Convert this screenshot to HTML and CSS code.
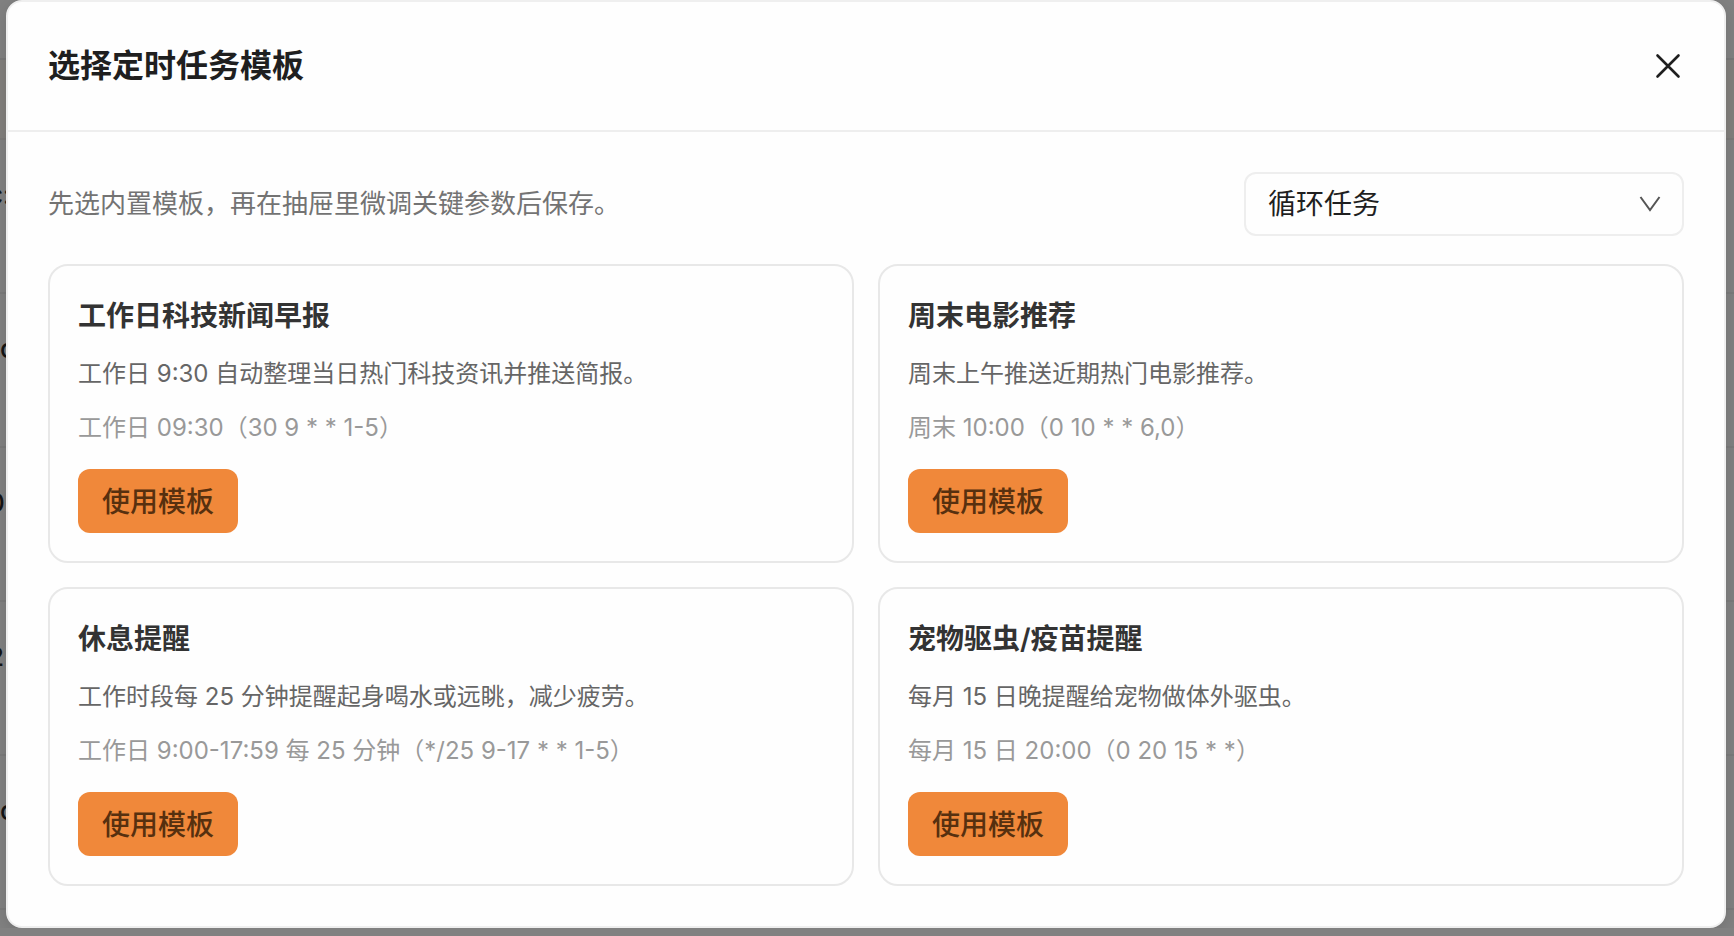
FILE: index.html
```html
<!DOCTYPE html>
<html lang="zh-CN">
<head>
  <meta charset="UTF-8">
  <meta name="viewport" content="width=device-width, initial-scale=1.0">
  <title>选择定时任务模板</title>
  <link rel="stylesheet" href="styles.css">
</head>
<body>
  <!-- Task list behind the modal -->
  <div class="page-behind" aria-hidden="true">
    <div class="row-head"></div>
    <div class="row"><span class="scrolled">c:</span></div>
    <div class="row"><span>c</span></div>
    <div class="row"><span class="scrolled">0</span></div>
    <div class="row"><span class="scrolled">2</span></div>
    <div class="row"><span>c</span></div>
  </div>

  <div class="modal" role="dialog" aria-labelledby="modalTitle">
    <header class="modal-header">
      <h1 id="modalTitle">选择定时任务模板</h1>
      <button class="close" type="button" aria-label="关闭">
        <svg viewBox="0 0 32 32" width="32" height="32" fill="none" stroke="currentColor" stroke-width="2.6" stroke-linecap="round">
          <path d="M5.5 5.5 26.5 26.5M26.5 5.5 5.5 26.5"/>
        </svg>
      </button>
    </header>

    <main class="modal-body">
      <div class="toolbar">
        <label for="taskType">先选内置模板，再在抽屉里微调关键参数后保存。</label>
        <div class="select-wrap">
          <select id="taskType">
            <option selected>循环任务</option>
          </select>
          <svg class="chevron" viewBox="0 0 24 24" width="24" height="24" fill="none" stroke="currentColor" stroke-width="2">
            <path d="M2.5 5 12 18 21.5 5"/>
          </svg>
        </div>
      </div>

      <div class="template-grid">
        <article class="template">
          <h2>工作日科技新闻早报</h2>
          <p class="desc">工作日 9:30 自动整理当日热门科技资讯并推送简报。</p>
          <p class="schedule">工作日 09:30（30 9 * * 1-5）</p>
          <button class="btn-primary" type="button">使用模板</button>
        </article>
        <article class="template">
          <h2>周末电影推荐</h2>
          <p class="desc">周末上午推送近期热门电影推荐。</p>
          <p class="schedule">周末 10:00（0 10 * * 6,0）</p>
          <button class="btn-primary" type="button">使用模板</button>
        </article>
        <article class="template">
          <h2>休息提醒</h2>
          <p class="desc">工作时段每 25 分钟提醒起身喝水或远眺，减少疲劳。</p>
          <p class="schedule">工作日 9:00-17:59 每 25 分钟（*/25 9-17 * * 1-5）</p>
          <button class="btn-primary" type="button">使用模板</button>
        </article>
        <article class="template">
          <h2>宠物驱虫/疫苗提醒</h2>
          <p class="desc">每月 15 日晚提醒给宠物做体外驱虫。</p>
          <p class="schedule">每月 15 日 20:00（0 20 15 * *）</p>
          <button class="btn-primary" type="button">使用模板</button>
        </article>
      </div>
    </main>
  </div>
</body>
</html>
```

FILE: styles.css
```css
* {
  box-sizing: border-box;
}
body {
  margin: 0;
  padding: 0 8px 0 6px;
  background: #818181;
  color: #1f1f1f;
  font-family: Inter, "Noto Sans CJK SC", sans-serif;
  overflow: hidden;
}
h1, h2, p {
  margin: 0;
}
button, select {
  font-family: inherit;
}

/* Dimmed page under the modal */
.page-behind {
  position: absolute;
  inset: 0;
  padding-top: 58px;
  overflow: hidden;
  color: #141414;
  font-size: 26px;
  font-weight: 500;
}
.row-head {
  height: 82px;
  background: #827f7c;
  border-top: 2px solid #787878;
  border-bottom: 2px solid #7c7a78;
}
.row {
  display: flex;
  align-items: center;
  height: 154px;
  padding-bottom: 44px;
  border-bottom: 2px solid #7a7a7a;
}
.row .scrolled {
  margin-left: -12px;
}

/* Modal */
.modal {
  position: relative;
  background: #fefefe;
  border: 2px solid #efefef;
  border-radius: 16px;
  box-shadow: 0 4px 16px rgba(0,0,0,0.12);
}
.modal-header {
  display: flex;
  justify-content: space-between;
  align-items: center;
  height: 130px;
  padding: 0 40px;
  border-bottom: 2px solid #eee;
}
.modal-header h1 {
  font-size: 32px;
  line-height: 48px;
  font-weight: 600;
}
.close {
  display: flex;
  padding: 0;
  background: none;
  border: none;
  color: #1f1f1f;
  cursor: pointer;
}
.modal-body {
  padding: 40px;
}
.toolbar {
  display: flex;
  justify-content: space-between;
  align-items: center;
  margin-bottom: 28px;
}
.toolbar label {
  font-size: 26px;
  line-height: 40px;
  color: #737373;
}
.select-wrap {
  position: relative;
  width: 440px;
}
.select-wrap select {
  appearance: none;
  display: block;
  width: 100%;
  height: 64px;
  padding: 0 56px 0 22px;
  background: #fefefe;
  border: 2px solid #eee;
  border-radius: 12px;
  color: #1f1f1f;
  font-size: 28px;
}
.chevron {
  position: absolute;
  top: 20px;
  right: 22px;
  color: #555;
  pointer-events: none;
}

/* Template cards */
.template-grid {
  display: grid;
  grid-template-columns: 1fr 1fr;
  gap: 24px;
}
.template {
  padding: 28px;
  border: 2px solid #e8e8e8;
  border-radius: 20px;
}
.template h2 {
  font-size: 28px;
  line-height: 45px;
  font-weight: 600;
  color: #333;
}
.desc, .schedule {
  margin-top: 16px;
  font-size: 24px;
  line-height: 38px;
}
.desc {
  color: #666;
}
.schedule {
  color: #999;
}
.btn-primary {
  display: block;
  height: 64px;
  margin-top: 22px;
  padding: 0 24px 2px;
  background: #f0883a;
  border: none;
  border-radius: 12px;
  color: #57300f;
  font-size: 28px;
  font-weight: 500;
  cursor: pointer;
}
```
